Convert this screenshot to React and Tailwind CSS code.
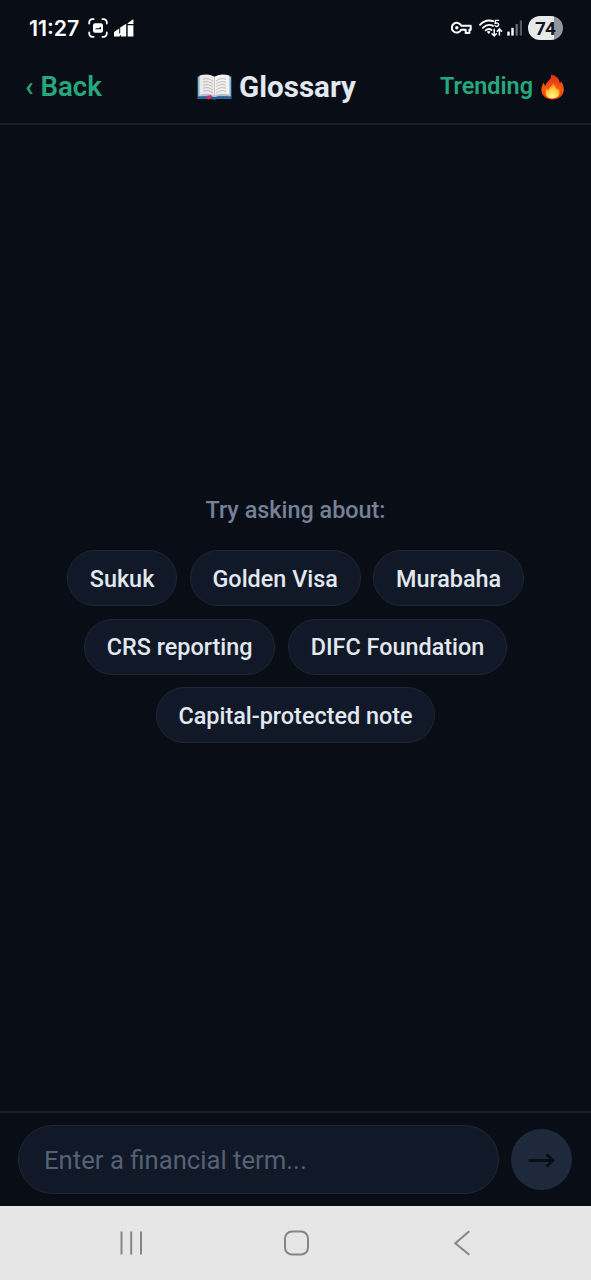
import { useState } from 'react';

const suggestionRows = [
  ['Sukuk', 'Golden Visa', 'Murabaha'],
  ['CRS reporting', 'DIFC Foundation'],
  ['Capital-protected note'],
];

const CaptureIcon = () => (
  <svg width="20" height="20" viewBox="0 0 20 20" fill="none" stroke="#fff" strokeWidth="1.8" strokeLinecap="round">
    <path d="M1.2 5.6V4.4a3.2 3.2 0 0 1 3.2-3.2h1.2M14.4 1.2h1.2a3.2 3.2 0 0 1 3.2 3.2v1.2M18.8 14.4v1.2a3.2 3.2 0 0 1-3.2 3.2h-1.2M5.6 18.8H4.4a3.2 3.2 0 0 1-3.2-3.2v-1.2" />
    <rect x="5" y="5.2" width="10" height="9.6" rx="2" fill="#fff" stroke="none" />
    <path d="M6.8 11.2 8.8 10l1.5.5 2.7-1.7v2.4z" fill="#090d16" stroke="none" />
  </svg>
);

const BarsIcon = () => (
  <svg width="20" height="18" viewBox="0 0 20 18" fill="#fff">
    <path d="M0 17.4v-3.6q0-.8.7-1.2l4.5-3v4.9h1V8.600l6-3.800v12.600H6.800v-1.500h-1v1.500zM13.700 4.300 18.700.4h.7v4.700h-5.700zM13.700 6.300h5.700v11.100h-5.700z" />
  </svg>
);

const KeyIcon = () => (
  <svg width="21" height="14" viewBox="0 0 21 14" fill="none" stroke="#fff" strokeWidth="2" strokeLinejoin="round">
    <path d="M10.2 4.7h9.5v4h-1.3v3.2h-3.7V8.7h-4.500a4.900 4.900 0 1 1 0-4z" />
    <circle cx="5.8" cy="6.7" r="1.7" fill="#fff" stroke="none" />
  </svg>
);

const WifiIcon = () => (
  <svg width="24" height="19" viewBox="0 0 24 19" fill="none" stroke="#fff" strokeWidth="1.8" strokeLinecap="round">
    <path d="M1 5.8C4.7 1.900 9.800.8 14.200 2.200M3.800 8.800c3-2.800 7-3.500 10.200-1.900M6.600 11.400c1.800-1.500 4.300-1.700 6-.3" />
    <path d="M7.800 12.800a3 3 0 0 1 3.800 0l-1.900 2.200z" fill="#fff" stroke="none" />
    <path d="M15.200 10.200v6.600m-2.200-2 2.200 2.200 2.200-2.200M20.400 16V10m-2.200 2.200 2.200-2.300 2.200 2.300" strokeWidth="1.5" />
    <path d="M19.600 1.400h-3.100l-.3 2.900c1.500-.7 3.400-.2 3.400 1.400 0 1.800-2.300 2.200-3.600 1.100" strokeWidth="1.4" />
  </svg>
);

const SignalIcon = () => (
  <svg width="16" height="16" viewBox="0 0 16 16">
    <rect x="0.3" y="11.6" width="2.4" height="4" fill="#fff" />
    <rect x="4.3" y="7.8" width="2.4" height="7.8" fill="#fff" />
    <rect x="8.6" y="4" width="2.2" height="11.6" fill="#6c7077" />
    <rect x="12.8" y="0.4" width="2.2" height="15.2" fill="#565a62" />
  </svg>
);

const BookIcon = () => (
  <svg width="35" height="26" viewBox="0 0 35 26">
    <path d="M.7 2.4h33.6v22.3H20l-2.5.8-2.5-.8H.7z" fill="#75b4d8" />
    <path d="M.7 22.2h33.6v2.5H20l-2.5.8-2.5-.8H.7z" fill="#275b91" />
    <path d="M2.5 1.4C8-.2 14.5-.1 17.5 3.1v20c-3.7-2.3-10-2.5-15-.8z" fill="#eee9e9" />
    <path d="M32.5 1.4C27-.2 20.5-.1 17.5 3.1v20c3.7-2.3 10-2.5 15-.8z" fill="#f5f1f1" />
    <path d="M2.5 20.7c5-1.5 11.3-1.2 15 1 3.7-2.2 10-2.5 15-1v1.6c-5-1.4-11.3-1.2-15 .8-3.700-2-10-2.200-15-.8z" fill="#b6bfd0" />
    <path d="M6 5.200c4-1.200 7-.5 9.800 1.800M6 8.200c4-1.200 7-.5 9.800 1.800M6 11.200c4-1.200 7-.5 9.800 1.800M6 14.200c4-1.200 7-.5 9.800 1.800M6 17.200c4-1.200 7-.5 9.800 1.800M29 5.200c-4-1.200-7-.5-9.800 1.800M29 8.200c-4-1.200-7-.5-9.800 1.800M29 11.200c-4-1.200-7-.5-9.800 1.800M29 14.200c-4-1.200-7-.5-9.800 1.800M29 17.200c-4-1.200-7-.5-9.800 1.800" fill="none" stroke="#b7b3b6" strokeWidth="0.9" />
    <path d="M17.500 3v20" stroke="#c8c4c8" strokeWidth="1" />
    <path d="M14.500 21.300c-1.800 0-3.600.2-4.800.9l-.4 2.100 2.300 1.500 2-1.300z" fill="#d92c58" />
  </svg>
);

const FireIcon = () => (
  <svg width="23" height="26" viewBox="0 0 23 26">
    <defs>
      <linearGradient id="flame" x1="0" y1="0" x2="0" y2="1">
        <stop offset="0" stopColor="#d92d1c" />
        <stop offset="0.6" stopColor="#fb5a14" />
        <stop offset="1" stopColor="#f8300f" />
      </linearGradient>
      <radialGradient id="core" cx="0.5" cy="0.85" r="0.8">
        <stop offset="0" stopColor="#fff5a0" />
        <stop offset="0.5" stopColor="#ffd13a" />
        <stop offset="1" stopColor="#ff8a1c" />
      </radialGradient>
    </defs>
    <path d="M9.8.5c5.400.8 8.900 4.100 9 9.100.7-.4 1-1.400 1-2.500 2.200 2.800 3 5.600 3 8.400 0 6-4.800 10-11.300 10S.4 21.500.4 15.800C.4 12.700 1.600 10 3 8.300c0 1.700.5 2.800 1.500 3.500C4.700 7.400 11.500 5.700 9.800.5z" fill="url(#flame)" />
    <path d="M12.400 8.500c.2 3.500 3.200 4.500 3.600 7.600.6-.3.900-.9 1-1.600 1 1.400 1.500 2.800 1.500 4.300 0 3.600-2.900 5.700-7.100 5.700s-6.800-2.100-6.800-5.500c0-1.900.6-3.400 1.500-4.400.2 1.200.8 1.800 1.500 2 .2-3.300 4.400-4.200 4.800-8.100z" fill="url(#core)" />
  </svg>
);

const StatusBar = () => (
  <div className="flex h-14 items-center justify-between pl-[29px] pr-7">
    <div className="flex items-center">
      <span className="w-[59px] pt-[2px] font-[Inter] text-[21.3px] font-semibold leading-none text-white">11:27</span>
      <CaptureIcon />
      <span className="ml-[6px]"><BarsIcon /></span>
    </div>
    <div className="flex items-center">
      <KeyIcon />
      <span className="ml-[7px]"><WifiIcon /></span>
      <span className="ml-[4px]"><SignalIcon /></span>
      <span className="ml-[5px] flex h-6 w-[35px] items-center justify-center rounded-full bg-linear-to-r from-[#e8e9eb] from-74% to-[#93969c] to-74% pr-[1px] text-[19px] font-bold leading-none tracking-[-1px] text-[#11151d]">
        74
      </span>
    </div>
  </div>
);

const Header = () => (
  <header className="grid h-[69px] grid-cols-[172px_1fr_auto] items-center border-b-2 border-[#1a202b] pl-[25px] pr-[27px] pb-[6px]">
    <button className="justify-self-start pt-[1px] text-[27.6px] font-semibold leading-none text-[#27a87c]">‹ Back</button>
    <h1 className="flex items-center gap-[7px] text-[29.6px] font-bold leading-none text-[#e2e8f0]">
      <BookIcon />
      <span className="pt-[2px]">Glossary</span>
    </h1>
    <button className="flex items-center gap-[8px] text-[23.4px] font-semibold leading-none text-[#27a87c]">
      <span className="pt-[1px]">Trending</span>
      <FireIcon />
    </button>
  </header>
);

const NavBar = () => (
  <nav className="flex h-[74px] items-center bg-[#e6e6e6] pl-[119px] text-[#858585]">
    <svg width="25" height="26" viewBox="0 0 25 26" stroke="currentColor" strokeWidth="2">
      <path d="M2.5 1.500v23M12.200 1.500v23M22 1.500v23" />
    </svg>
    <svg className="ml-[139px]" width="27" height="26" viewBox="0 0 27 26" fill="none" stroke="currentColor" strokeWidth="2">
      <rect x="2" y="1.5" width="23" height="23" rx="7" />
    </svg>
    <svg className="ml-[143px]" width="18" height="26" viewBox="0 0 18 26" fill="none" stroke="currentColor" strokeWidth="2">
      <path d="M16.300 1.300 2.300 13.200l14 11.500" />
    </svg>
  </nav>
);

export default function App() {
  const [term, setTerm] = useState('');

  return (
    <div className="flex h-[1280px] w-[591px] flex-col overflow-hidden bg-[#090d16] font-[Roboto,sans-serif]">
      <StatusBar />
      <Header />

      {/* Suggestions */}
      <main className="flex flex-1 flex-col items-center justify-center pb-[2px] pt-[5px]">
        <p className="mb-[26px] text-[23.4px] font-medium leading-7 text-[#748197]">Try asking about:</p>
        <div className="flex flex-col items-center gap-[12.5px]">
          {suggestionRows.map((row) => (
            <div key={row[0]} className="flex gap-[12.5px]">
              {row.map((label) => (
                <button
                  key={label}
                  onClick={() => setTerm(label)}
                  className="h-14 whitespace-nowrap rounded-full border-[1.5px] border-[#1e2735] bg-[#111827] px-[21.8px] pt-[3px] text-[23.4px] font-medium leading-none text-[#e2e8f0]"
                >
                  {label}
                </button>
              ))}
            </div>
          ))}
        </div>
      </main>

      {/* Term input */}
      <form className="flex h-[95px] items-center gap-[12px] border-t-2 border-[#1a202b] pl-[18px] pr-[19px]" onSubmit={(e) => e.preventDefault()}>
        <input
          value={term}
          onChange={(e) => setTerm(e.target.value)}
          placeholder="Enter a financial term..."
          className="h-[69px] min-w-0 flex-1 rounded-full border-[1.5px] border-[#1e2735] bg-[#111827] px-[25px] pt-px text-[25.7px] text-[#e2e8f0] outline-none placeholder:text-[#556174]"
        />
        <button aria-label="Send" className="flex size-[61px] items-center justify-center rounded-full bg-[#1e293b] text-[#0a0e18]">
          <svg width="28" height="16" viewBox="0 0 28 16" fill="none" stroke="currentColor" strokeWidth="2.800">
            <path d="M.500 8.500h24.500M18.500 2.500l6.500 6-6.500 6" />
          </svg>
        </button>
      </form>

      <NavBar />
    </div>
  );
}
